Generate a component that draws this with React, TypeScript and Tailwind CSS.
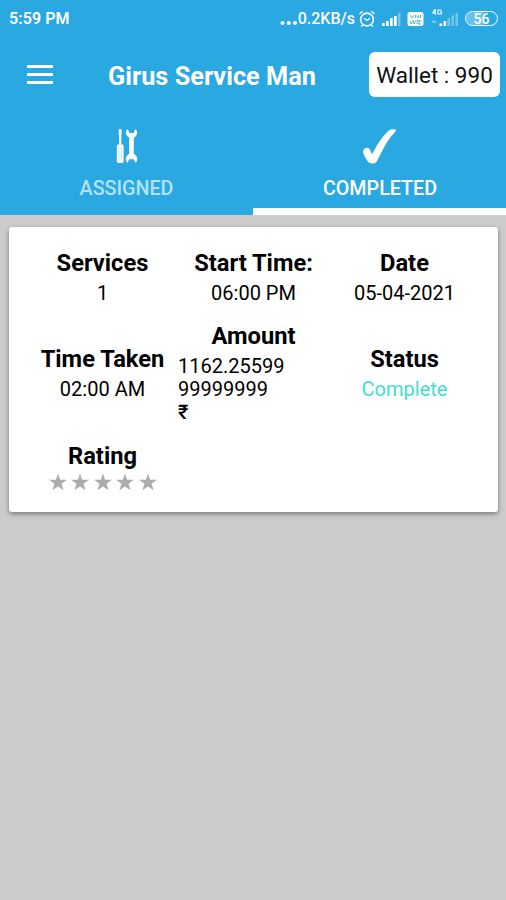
const stars = [1, 2, 3, 4, 5]

function StatusBar() {
  return <div className="flex h-[38px] items-center pl-[9px] pr-[8px]">
    <span className="text-[16px] font-semibold tracking-[0.1px]">5:59 PM</span>
    <div className="ml-auto flex items-center">
      <svg width="18" height="18" viewBox="0 0 18 18" fill="#fff">
        <circle cx="2.5" cy="13" r="2" />
        <circle cx="8.8" cy="13" r="2" />
        <circle cx="15" cy="13" r="2" />
      </svg>
      <span className="whitespace-nowrap text-[16px] font-medium">0.2KB/s</span>
      <svg className="ml-[3px]" width="18" height="18" viewBox="0 0 17 18" fill="none" stroke="#fff" strokeWidth="1.6">
        <circle cx="8.5" cy="9.5" r="6.4" />
        <path d="M5.5 8.3l3 2.2 3-2.2M1 4l3-2.7M16 4l-3-2.7M4 15l-1.2 1.6M13 15l1.2 1.6" strokeWidth="1.4" />
      </svg>
      <svg className="ml-[6px]" width="19" height="16" viewBox="0 0 19 16" fill="#fff">
        <path d="M0 12h2.7v3H0zM4 10h2.7v5H4zM8 7h2.7v8H8zM12 5h2.7v10H12z" />
        <path d="M16 2h2.5v13H16z" opacity=".35" />
      </svg>
      <svg className="ml-[6px]" width="17" height="16" viewBox="0 0 17 16">
        <rect x=".5" y="1" width="16" height="14" rx="2.5" fill="#fff" />
        <path d="M3 4l2 3 2-3M8.5 7V4l3 3V4M13.5 4v3M3 9.5l1.2 3.5L6 9.5l1.2 3.5 1.3-3.500M10 13V9.500h3.500L11 13h3" fill="none" stroke="#29a8e1" strokeWidth=".8" />
      </svg>
      <svg className="ml-[8px]" width="27" height="20" viewBox="0 0 27 20" fill="#fff">
        <path d="M3.2 0L.8 4h2.4v2M3.2 0v6M9.5 1H6v4h3.5V3H8" fill="none" stroke="#fff" strokeWidth="1.1" />
        <path d="M7.5 14.5h2.6V17H7.5zM11.5 12h2.6v5h-2.6z" />
        <path d="M0 11.5h4V14H0zM15.4 9H18v8h-2.6zM19.4 6.5H22V17h-2.6zM23.4 4H26v13h-2.6z" opacity=".35" />
      </svg>
      <span className="relative mb-px ml-[6px] flex h-[15px] w-[33px] items-center justify-center overflow-hidden rounded-full border-[1.5px] border-white">
        <span className="absolute inset-y-0 left-0 w-[18px] bg-white/30" />
        <span className="relative text-[14px] font-medium leading-none">56</span>
      </span>
    </div>
  </div>
}

function ToolsIcon() {
  return <svg width="22" height="36" viewBox="0 0 22 36" fill="#fff">
    <path d="M3.2 1h1.9l.7 1.5-.5 5.5v8H3V8l-.5-5.5z" />
    <path d="M2 16.3h4.4l1.2 1.5v15.4q0 1.8-1.8 1.8H2.6Q.8 35 .8 33.2V17.8z" />
    <path d="M3 19.5v12.5M5.4 19.5v12.5" stroke="#29a8e1" strokeWidth=".5" opacity=".5" />
    <path d="M11.7 1C9 3 9.300 7.500 13.200 9.700V25.700C9.300 28 9 32.200 11.300 34.900L13.300 31.200H17.600L19.700 34.900C22.200 32 21.700 28 17.800 25.700V9.700C21.800 7.500 22 3 19.300 1L17.500 4.900H13.500Z" />
  </svg>
}

function CheckIcon() {
  return <svg width="36" height="36" viewBox="0 0 36 36" fill="#fff">
    <path d="M1.200 24.500C.6 21.600 3.500 19.600 6 19.900 8.300 20.200 8.400 23.500 10.200 26 14.500 17.800 19.800 8.600 26.800 2.500 28.500 1 33.500.8 34.100 2.100 34.500 3 32.400 4.800 31.200 6.100 24.800 12.700 19.900 23.800 15.300 32.600 14.200 34.700 13.300 35.500 10.800 35.500 8 35.500 6.800 35 5.700 33.300 4 30.500 1.800 27.500 1.200 24.500Z" />
  </svg>
}

function Cell({ title, children }: { title: string; children: React.ReactNode }) {
  return <div className="text-center">
    <h2 className="text-[23.700px] font-bold leading-[28px]">{title}</h2>
    <div className="mt-[5px] text-[20px] leading-[23px]">{children}</div>
  </div>
}

export default function App() {
  return <div className="min-h-screen bg-[#cbcbcb] font-['Roboto',sans-serif] text-black">
    <header className="bg-[#29a8e1] text-white">
      <StatusBar />

      <div className="flex h-[73px] items-center pl-[27px] pr-[6px]">
        <button className="flex w-[26px] flex-col gap-[5px]">
          <span className="h-[3px] bg-white" />
          <span className="h-[3px] bg-white" />
          <span className="h-[3px] bg-white" />
        </button>
        <h1 className="ml-[55px] whitespace-nowrap pt-[4px] text-[25.300px] font-bold">Girus Service Man</h1>
        <div className="ml-auto flex h-[45px] w-[131px] items-center justify-center whitespace-nowrap rounded-[6px] bg-white pt-[3px] text-[22.500px] text-[#111]">
          Wallet : 990
        </div>
      </div>

      <nav className="grid h-[104px] grid-cols-2">
        <div className="flex flex-col items-center pt-[17px] text-[#b5e1f7]">
          <ToolsIcon />
          <span className="mt-[11px] text-[19.700px] font-medium leading-[28px]">ASSIGNED</span>
        </div>
        <div className="flex flex-col items-center border-b-[7px] border-white pl-px pt-[17px]">
          <CheckIcon />
          <span className="mt-[11px] text-[19.700px] font-medium leading-[28px]">COMPLETED</span>
        </div>
      </nav>
    </header>

    <main className="px-[8px] pt-[12px]">
      <div className="ml-px grid h-[285px] grid-cols-3 content-start items-center gap-y-[17px] rounded-[3px] bg-white px-[18px] pt-[22px] shadow-[0_2px_5px_rgba(0,0,0,0.4)]">
        <Cell title="Services">1</Cell>
        <Cell title="Start Time:">06:00 PM</Cell>
        <Cell title="Date">05-04-2021</Cell>
        <Cell title="Time Taken">02:00 AM</Cell>
        <Cell title="Amount">
          <p className="text-left">1162.25599<br />99999999<br /><span className="font-medium">₹</span></p>
        </Cell>
        <Cell title="Status"><span className="text-[#40e0d0]">Complete</span></Cell>
        <div className="pt-px text-center">
          <h2 className="text-[23.700px] font-bold leading-[28px]">Rating</h2>
          <div className="flex justify-center gap-[4.500px]">
            {stars.map((star) => (
              <svg key={star} width="18" height="24" viewBox="0 0 18 24" fill="#adadad">
                <path d="M9 3.500l2.150 6.300H18l-5.450 4 2.050 6.500L9 16.400l-5.600 3.900 2.050-6.500L0 9.800h6.850z" />
              </svg>
            ))}
          </div>
        </div>
      </div>
    </main>
  </div>
}
